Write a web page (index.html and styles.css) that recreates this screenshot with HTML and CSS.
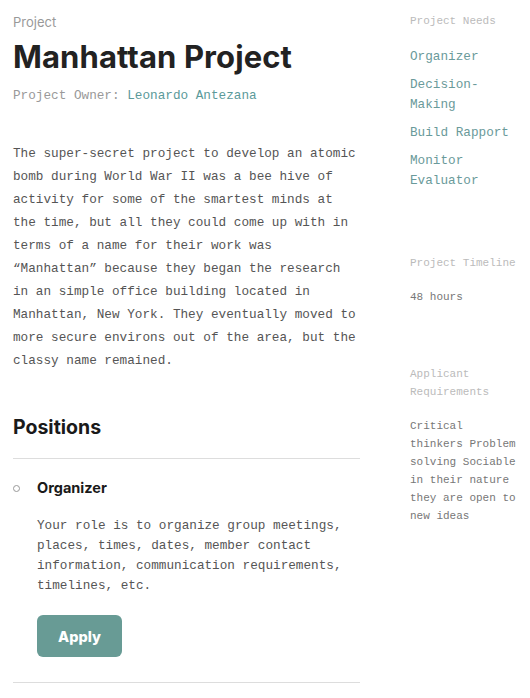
FILE: index.html
```html
<!DOCTYPE html>
<html>
<head>
<meta charset="utf-8">
<link rel="stylesheet" href="styles.css">
</head>
<body>
<div class="page">
  <main class="main">
    <div class="kicker">Project</div>
    <h1 class="title">Manhattan Project</h1>
    <div class="owner">Project Owner: <span class="owner-name">Leonardo Antezana</span></div>
    <p class="desc">The super-secret project to develop an atomic bomb during World War II was a bee hive of activity for some of the smartest minds at the time, but all they could come up with in terms of a name for their work was “Manhattan” because they began the research in an simple office building located in Manhattan, New York. They eventually moved to more secure environs out of the area, but the classy name remained.</p>
    <h2 class="section-title">Positions</h2>
    <ul class="positions">
      <li class="position">
        <h3 class="position-title">Organizer</h3>
        <p class="position-desc">Your role is to organize group meetings, places, times, dates, member contact information, communication requirements, timelines, etc.</p>
        <button class="apply">Apply</button>
      </li>
    </ul>
  </main>
  <aside class="side">
    <div class="side-block">
      <div class="side-label">Project Needs</div>
      <ul class="needs">
        <li>Organizer</li>
        <li>Decision-Making</li>
        <li>Build Rapport</li>
        <li>Monitor Evaluator</li>
      </ul>
    </div>
    <div class="side-block timeline">
      <div class="side-label">Project Timeline</div>
      <p class="side-text">48 hours</p>
    </div>
    <div class="side-block reqs">
      <div class="side-label">Applicant Requirements</div>
      <p class="side-text">Critical thinkers Problem solving Sociable in their nature they are open to new ideas</p>
    </div>
  </aside>
</div>
</body>
</html>
```

FILE: styles.css
```css
* { box-sizing: border-box; }
html, body { margin: 0; padding: 0; background: #fff; }
body { font-family: "Liberation Mono", monospace; color: #555; }

.page {
  display: flex;
  gap: 50px;
  padding: 13px 0 0 13px;
}
.main { width: 347px; flex: none; }
.side { width: 108px; flex: none; margin-top: -1px; }

.kicker {
  font-family: Inter, "Liberation Sans", sans-serif;
  font-size: 13px;
  color: #999;
  line-height: 18px;
}
.title {
  font-family: Inter, "Liberation Sans", sans-serif;
  font-weight: 700;
  font-size: 31px;
  line-height: 36px;
  color: #222;
  margin: 8px 0 12px;
  letter-spacing: 0.1px;
}
.owner {
  font-size: 12.7px;
  line-height: 18px;
  color: #999;
}
.owner-name { color: #5b9a9a; }
.desc {
  font-size: 12.7px;
  line-height: 23px;
  color: #555;
  margin: 37px 0 0;
}
.section-title {
  font-family: Inter, "Liberation Sans", sans-serif;
  font-weight: 700;
  font-size: 19.5px;
  line-height: 26px;
  color: #1a1a1a;
  margin: 42px 0 0;
  padding-bottom: 18px;
  border-bottom: 1px solid #ddd;
}
.positions {
  list-style: none;
  margin: 0;
  padding: 0;
  border-bottom: 1px solid #ddd;
}
.position {
  position: relative;
  padding: 19px 0 25px 24px;
}
.position::before {
  content: "";
  position: absolute;
  left: 0;
  top: 26px;
  width: 5px;
  height: 5px;
  border: 1px solid #999;
  border-radius: 50%;
}
.position-title {
  font-family: Inter, "Liberation Sans", sans-serif;
  font-weight: 700;
  font-size: 14.5px;
  line-height: 20px;
  color: #1a1a1a;
  margin: 0;
}
.position-desc {
  font-size: 12.7px;
  line-height: 20px;
  color: #555;
  margin: 18px 0 0;
}
.apply {
  display: block;
  margin-top: 19px;
  width: 85px;
  height: 42px;
  border: none;
  border-radius: 6px;
  background: #689b95;
  color: #fff;
  font-family: Inter, "Liberation Sans", sans-serif;
  font-weight: 800;
  font-size: 14.5px;
  cursor: pointer;
}

.side-label {
  font-size: 11px;
  line-height: 18px;
  color: #bbb;
}
.needs {
  list-style: none;
  margin: 17px 0 0;
  padding: 0;
  font-size: 12.7px;
  line-height: 20px;
  color: #6a9a9a;
}
.needs li { margin-bottom: 8px; }
.timeline { margin-top: 63px; }
.reqs { margin-top: 59px; }
.side-text {
  font-size: 11px;
  line-height: 18px;
  color: #777;
  margin: 16px 0 0;
}
```
